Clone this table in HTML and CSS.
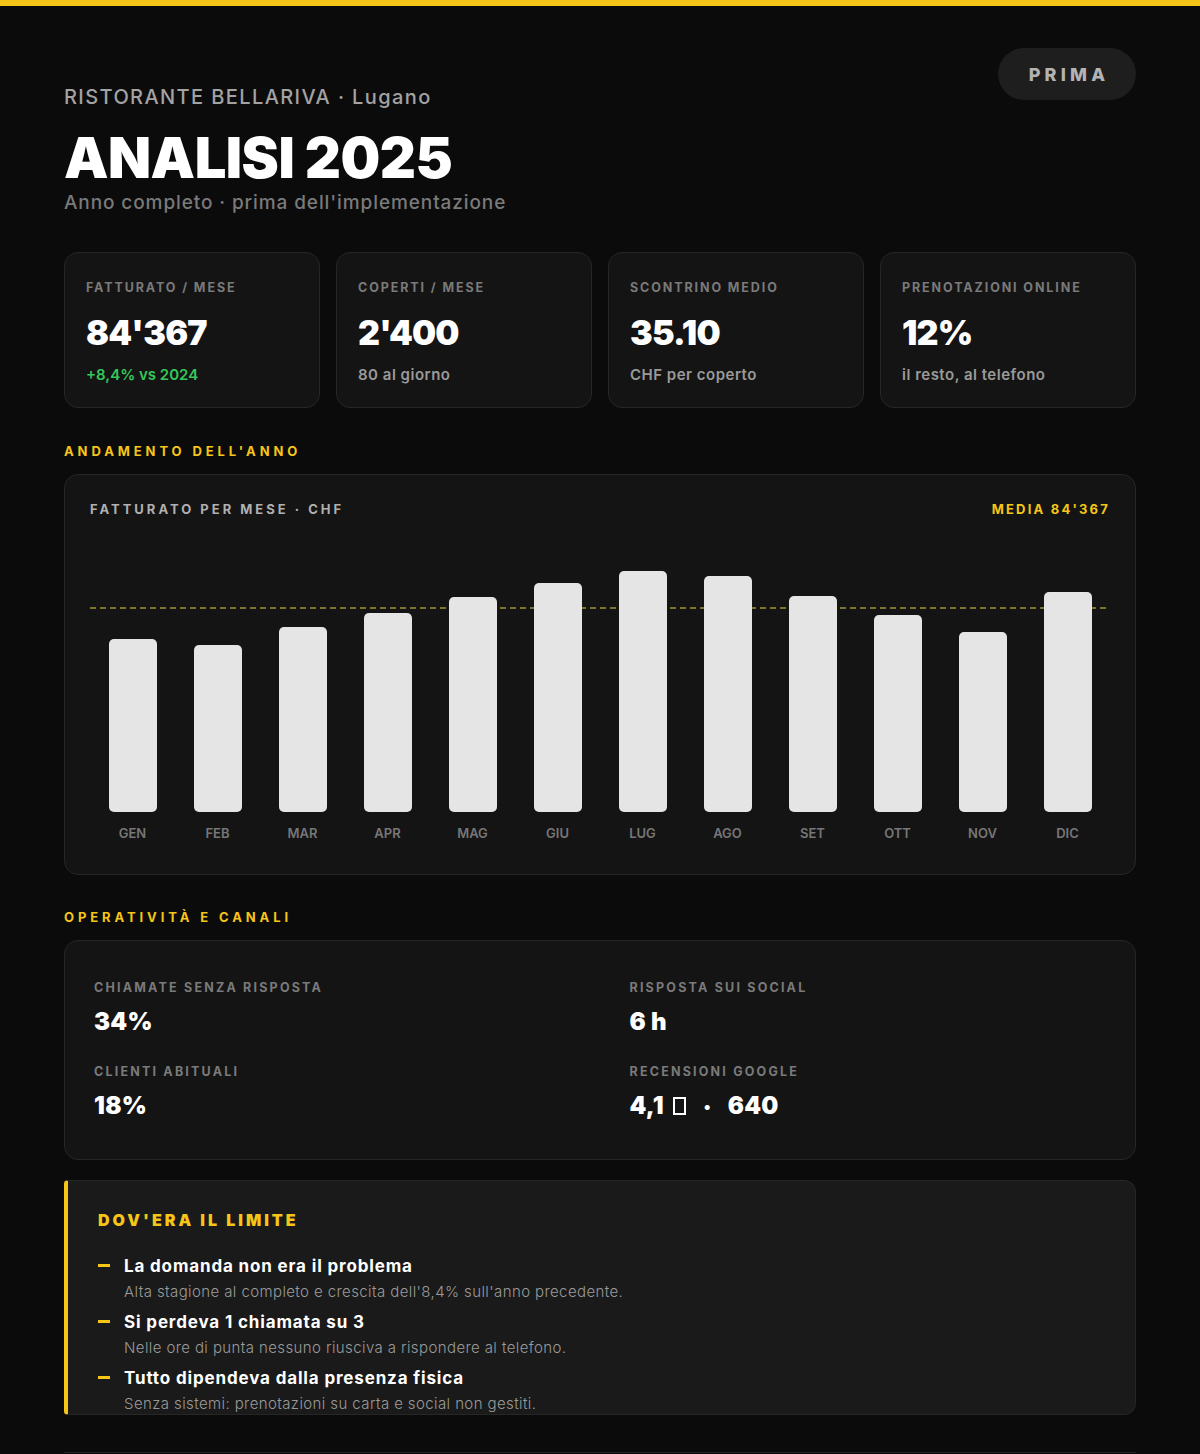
FILE: index.html
```html
<!DOCTYPE html>
<html lang="it">
<head>
<meta charset="utf-8">
<title>Analisi 2025 · Ristorante Bellariva</title>
<link rel="stylesheet" href="styles.css">
</head>
<body>
<div class="topbar"></div>
<main class="page">
  <header class="hero">
    <div class="hero-text">
      <p class="venue">RISTORANTE BELLARIVA · Lugano</p>
      <h1 class="title">ANALISI 2025</h1>
      <p class="subtitle">Anno completo · prima dell'implementazione</p>
    </div>
    <span class="pill">PRIMA</span>
  </header>

  <section class="kpis">
    <div class="kpi">
      <div class="kpi-label">FATTURATO / MESE</div>
      <div class="kpi-value">84'367</div>
      <div class="kpi-sub up">+8,4% vs 2024</div>
    </div>
    <div class="kpi">
      <div class="kpi-label">COPERTI / MESE</div>
      <div class="kpi-value">2'400</div>
      <div class="kpi-sub">80 al giorno</div>
    </div>
    <div class="kpi">
      <div class="kpi-label">SCONTRINO MEDIO</div>
      <div class="kpi-value">35.10</div>
      <div class="kpi-sub">CHF per coperto</div>
    </div>
    <div class="kpi">
      <div class="kpi-label">PRENOTAZIONI ONLINE</div>
      <div class="kpi-value">12%</div>
      <div class="kpi-sub">il resto, al telefono</div>
    </div>
  </section>

  <h2 class="section-title">ANDAMENTO DELL'ANNO</h2>
  <section class="card chart">
    <div class="chart-head">
      <span class="chart-label">FATTURATO PER MESE · CHF</span>
      <span class="chart-avg">MEDIA 84'367</span>
    </div>
    <div class="plot">
      <div class="avg-line"></div>
      <div class="col"><div class="bar" style="height:173px"></div><span class="month">GEN</span></div>
      <div class="col"><div class="bar" style="height:167px"></div><span class="month">FEB</span></div>
      <div class="col"><div class="bar" style="height:185px"></div><span class="month">MAR</span></div>
      <div class="col"><div class="bar" style="height:199px"></div><span class="month">APR</span></div>
      <div class="col"><div class="bar" style="height:215px"></div><span class="month">MAG</span></div>
      <div class="col"><div class="bar" style="height:229px"></div><span class="month">GIU</span></div>
      <div class="col"><div class="bar" style="height:241px"></div><span class="month">LUG</span></div>
      <div class="col"><div class="bar" style="height:236px"></div><span class="month">AGO</span></div>
      <div class="col"><div class="bar" style="height:216px"></div><span class="month">SET</span></div>
      <div class="col"><div class="bar" style="height:197px"></div><span class="month">OTT</span></div>
      <div class="col"><div class="bar" style="height:180px"></div><span class="month">NOV</span></div>
      <div class="col"><div class="bar" style="height:220px"></div><span class="month">DIC</span></div>
    </div>
  </section>

  <h2 class="section-title after-chart">OPERATIVITÀ E CANALI</h2>
  <section class="card ops">
    <div class="op">
      <div class="op-label">CHIAMATE SENZA RISPOSTA</div>
      <div class="op-value">34%</div>
    </div>
    <div class="op">
      <div class="op-label">RISPOSTA SUI SOCIAL</div>
      <div class="op-value">6 h</div>
    </div>
    <div class="op">
      <div class="op-label">CLIENTI ABITUALI</div>
      <div class="op-value">18%</div>
    </div>
    <div class="op">
      <div class="op-label">RECENSIONI GOOGLE</div>
      <div class="op-value">4,1 <span class="tofu"></span> <span class="sep">•</span> 640</div>
    </div>
  </section>

  <section class="limit">
    <h3 class="limit-title">DOV'ERA IL LIMITE</h3>
    <ul class="points">
      <li class="point">
        <span class="dash"></span>
        <div>
          <div class="point-title">La domanda non era il problema</div>
          <div class="point-desc">Alta stagione al completo e crescita dell'8,4% sull'anno precedente.</div>
        </div>
      </li>
      <li class="point">
        <span class="dash"></span>
        <div>
          <div class="point-title">Si perdeva 1 chiamata su 3</div>
          <div class="point-desc">Nelle ore di punta nessuno riusciva a rispondere al telefono.</div>
        </div>
      </li>
      <li class="point">
        <span class="dash"></span>
        <div>
          <div class="point-title">Tutto dipendeva dalla presenza fisica</div>
          <div class="point-desc">Senza sistemi: prenotazioni su carta e social non gestiti.</div>
        </div>
      </li>
    </ul>
  </section>

  <footer class="footer"></footer>
</main>
</body>
</html>
```

FILE: styles.css
```css
* { box-sizing: border-box; }

html, body {
  margin: 0;
  padding: 0;
  background: #0b0b0b;
  color: #ffffff;
  font-family: Inter, "Noto Sans", "Liberation Sans", sans-serif;
}

.topbar {
  height: 6px;
  background: #f5c518;
}

.page {
  padding: 42px 64px 0;
}

/* Hero */
.hero {
  display: flex;
  justify-content: space-between;
  align-items: flex-start;
}

.hero-text {
  padding-top: 37px;
}

.venue {
  margin: 0;
  font-size: 20px;
  line-height: 24px;
  font-weight: 500;
  letter-spacing: 1.4px;
  color: #a3a3a3;
}

.title {
  margin: 18px 0 2px;
  font-size: 56px;
  line-height: 62px;
  font-weight: 900;
  letter-spacing: -0.5px;
  color: #ffffff;
}

.subtitle {
  margin: 0;
  font-size: 19px;
  line-height: 24px;
  font-weight: 500;
  letter-spacing: 0.9px;
  color: #7a7a7a;
}

.pill {
  display: inline-flex;
  align-items: center;
  justify-content: center;
  width: 138px;
  height: 52px;
  border-radius: 26px;
  background: #1e1e1e;
  color: #b3b3b3;
  font-size: 18px;
  font-weight: 800;
  letter-spacing: 4.2px;
  padding-left: 4px;
}

/* KPI cards */
.kpis {
  display: grid;
  grid-template-columns: repeat(4, 1fr);
  gap: 16px;
  margin-top: 37px;
}

.kpi {
  background: #141414;
  border: 1px solid #262626;
  border-radius: 14px;
  padding: 27px 21px 22px;
}

.kpi-label {
  font-size: 12.5px;
  line-height: 16px;
  font-weight: 700;
  letter-spacing: 1.9px;
  color: #7a7a7a;
}

.kpi-value {
  margin-top: 17px;
  font-size: 34px;
  line-height: 40px;
  font-weight: 900;
  letter-spacing: -0.8px;
  color: #ffffff;
}

.kpi-sub {
  margin-top: 12px;
  font-size: 15px;
  line-height: 20px;
  font-weight: 600;
  letter-spacing: 0.5px;
  color: #9a9a9a;
}

.kpi-sub.up { color: #34c759; letter-spacing: 0; }

/* Section titles */
.section-title {
  margin: 35px 0 15px;
  font-size: 13px;
  line-height: 16px;
  font-weight: 700;
  letter-spacing: 3.9px;
  color: #f5c518;
}

.section-title.after-chart { margin-top: 34px; }

.card {
  background: #141414;
  border: 1px solid #262626;
  border-radius: 14px;
}

/* Chart */
.chart {
  padding: 26px 25px 33px;
}

.chart-head {
  display: flex;
  justify-content: space-between;
  font-size: 13px;
  line-height: 16px;
  font-weight: 700;
  letter-spacing: 3px;
}

.chart-label { color: #b0b0b0; }
.chart-avg { color: #f5c518; letter-spacing: 2.2px; }

.plot {
  position: relative;
  display: grid;
  grid-template-columns: repeat(12, 1fr);
  margin-top: 25px;
  height: 299px;
  align-items: end;
}

.avg-line {
  position: absolute;
  left: 0;
  right: 0;
  top: 65px;
  height: 2px;
  background: repeating-linear-gradient(to right, rgba(190, 180, 60, 0.6) 0 6px, transparent 6px 10px);
}

.col {
  position: relative;
  display: flex;
  flex-direction: column;
  align-items: center;
}

.bar {
  width: 48px;
  border-radius: 5px;
  background: #e5e5e5;
}

.month {
  margin-top: 13px;
  font-size: 13px;
  line-height: 16px;
  font-weight: 600;
  color: #777777;
}

/* Ops */
.ops {
  display: grid;
  grid-template-columns: 1fr 1fr;
  column-gap: 60px;
  row-gap: 27px;
  padding: 39px 30px 38px 29px;
}

.op-label {
  font-size: 12.5px;
  line-height: 16px;
  font-weight: 700;
  letter-spacing: 2.2px;
  color: #7a7a7a;
}

.op-value {
  margin-top: 11px;
  font-size: 24px;
  line-height: 30px;
  font-weight: 900;
  letter-spacing: 0.3px;
  color: #ffffff;
  display: flex;
  align-items: center;
}

.tofu {
  display: inline-block;
  width: 13px;
  height: 18px;
  border: 2px solid #ffffff;
  margin: 0 18px 0 9px;
}

.sep {
  font-size: 16px;
  margin-right: 17px;
}

/* Limit box */
.limit {
  margin-top: 20px;
  background: #1a1a1a;
  border: 1px solid #262626;
  border-left: 4px solid #f5c518;
  border-radius: 4px 12px 12px 4px;
  padding: 29px 30px 0;
}

.limit-title {
  margin: 0;
  font-size: 16px;
  line-height: 20px;
  font-weight: 900;
  letter-spacing: 3px;
  color: #f5c518;
}

.points {
  list-style: none;
  margin: 25px 0 0;
  padding: 0;
  display: flex;
  flex-direction: column;
  gap: 9px;
}

.point {
  display: flex;
  gap: 14px;
}

.dash {
  flex: none;
  width: 12px;
  height: 3px;
  margin-top: 9px;
  background: #f5c518;
}

.point-title {
  font-size: 17px;
  line-height: 22px;
  font-weight: 700;
  letter-spacing: 0.85px;
  color: #ffffff;
}

.point-desc {
  margin-top: 5px;
  font-size: 15px;
  line-height: 20px;
  font-weight: 300;
  letter-spacing: 0.4px;
  color: #9a9a9a;
}

.footer {
  margin-top: 37px;
  border-top: 1px solid #222222;
  height: 40px;
}
```
